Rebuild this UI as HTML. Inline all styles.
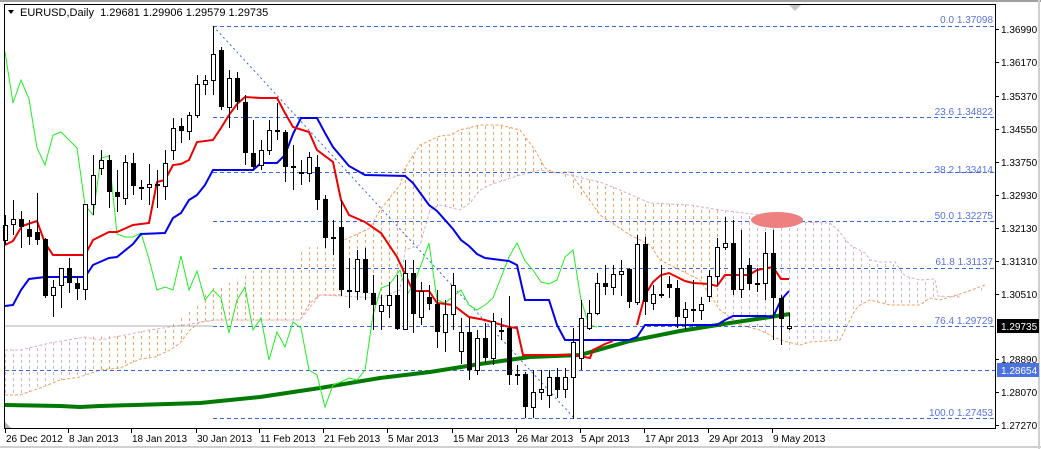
<!DOCTYPE html>
<html><head><meta charset="utf-8"><style>
html,body{margin:0;padding:0;background:#fff;width:1041px;height:449px;overflow:hidden}
svg{display:block;font-family:"Liberation Sans",Arial,sans-serif}
</style></head><body>
<svg width="1041" height="449" viewBox="0 0 1041 449" xmlns="http://www.w3.org/2000/svg">
<defs>
<pattern id="hatch" width="8" height="6" patternUnits="userSpaceOnUse" x="1">
<line x1="4.5" y1="0" x2="4.5" y2="3" stroke="#f0a060" stroke-width="1"/>
</pattern>
<pattern id="hatch2" width="8" height="6" patternUnits="userSpaceOnUse" x="1">
<line x1="4.5" y1="0" x2="4.5" y2="3" stroke="#d8b0cc" stroke-width="1"/>
</pattern>
</defs>
<rect x="0" y="0" width="1041" height="449" fill="#fff"/>
<line x1="0" y1="1" x2="1041" y2="1" stroke="#a0a0a0" stroke-width="2"/>
<line x1="1039" y1="0" x2="1039" y2="449" stroke="#d0d0d0" stroke-width="2"/>
<line x1="0" y1="447" x2="1041" y2="447" stroke="#d0d0d0" stroke-width="2"/>

<!-- cloud -->
<polygon fill="url(#hatch2)" points="5,350 20,350 50,343 85,337 100,340 120,336 150,330 170,327 180,318 200,303 210,288 225,285 245,275 255,270 270,268 294,267 300,252 310,247 325,247 340,242 370,228 380,210 400,185 405,168 420,145 440,136 450,135 460,130 480,125 500,125 520,130 535,150 545,168 555,173 570,172 600,182 620,190 650,203 690,205 720,210 760,215 790,222 830,223 838,230 850,245 865,253 870,260 880,262 895,262 905,276 920,280 935,279 938,296 960,297 985,285 985,290 960,294 940,300 930,298 920,305 890,305 870,300 860,305 855,310 840,340 810,342 800,345 790,350 780,340 760,330 740,325 720,310 700,280 680,270 660,260 650,245 630,235 600,215 580,195 560,173 540,170 520,175 490,185 480,190 470,203 460,210 440,205 430,210 420,245 405,250 400,290 380,298 360,300 350,302 340,295 320,295 310,303 300,320 215,320 200,322 190,330 180,343 170,350 155,357 140,359 120,368 100,370 80,377 60,380 40,388 20,395 5,395"/>
<polygon fill="url(#hatch)" points="85,337 120,336 150,330 170,327 180,318 200,303 210,288 225,285 245,275 255,270 270,268 294,267 300,252 310,247 325,247 340,242 370,228 380,210 400,185 405,168 420,145 440,136 450,135 460,130 480,125 500,125 520,130 535,150 545,168 520,175 490,185 480,190 470,203 460,210 440,205 430,210 420,245 405,250 400,290 380,298 360,300 340,295 320,295 310,303 300,320 215,320 200,322 190,330 180,343 170,350 155,357 140,359 120,368 100,370"/>
<polygon fill="url(#hatch)" points="560,173 600,182 620,190 650,203 690,205 720,210 720,310 700,280 680,270 660,260 650,245 630,235 600,215 580,195"/>
<polyline fill="none" stroke="#f0a060" stroke-width="1" stroke-dasharray="3,2" points="5,395 20,395 40,388 60,380 80,377 100,370 120,368 140,359 155,357 170,350 180,343 190,330 200,322 215,320 300,320 310,303 320,295 340,295 340,242 370,228 380,210 400,185 405,168 420,145 440,136 450,135 460,130 480,125 500,125 520,130 535,150 545,168 555,173 570,172 600,215 630,235 650,245 660,260 680,270 700,280 720,310 740,325 760,330 780,340 800,345 810,342 840,340 855,310 860,305 870,300 890,305 920,305 930,298 940,300 960,294 985,285"/>
<polyline fill="none" stroke="#d8b0cc" stroke-width="1" stroke-dasharray="3,2" points="5,350 20,350 50,343 85,337 100,340 120,336 150,330 170,327 215,320 300,320 320,295 380,298 400,290 405,250 420,245 430,210 440,205 460,210 470,203 480,190 490,185 520,175 540,170 560,173 600,182 620,190 650,203 690,205 720,210 760,215 790,222 830,223 838,230 850,245 865,253 870,260 880,262 895,262 905,276 920,280 935,279 938,296 960,297"/>

<line x1="5" y1="326" x2="213" y2="326" stroke="#b0b0b0"/>
<g stroke="#3a66e0" stroke-dasharray="4,3" stroke-width="1">
<line x1="213" y1="26.5" x2="995" y2="26.5"/>
<line x1="213" y1="117.5" x2="995" y2="117.5"/>
<line x1="213" y1="172.5" x2="995" y2="172.5"/>
<line x1="213" y1="221.5" x2="995" y2="221.5"/>
<line x1="213" y1="268.5" x2="995" y2="268.5"/>
<line x1="213" y1="326.5" x2="995" y2="326.5"/>
<line x1="5" y1="370.5" x2="995" y2="370.5"/>
<line x1="213" y1="418.5" x2="995" y2="418.5"/>
</g>
<line x1="213" y1="26" x2="575" y2="419" stroke="#3a66e0" stroke-dasharray="2,3"/>
<g fill="#5a72e0" font-size="10" text-anchor="end">
<text x="993" y="23">0.0 1.37098</text>
<text x="993" y="115">23.6 1.34822</text>
<text x="993" y="173">38.2 1.33414</text>
<text x="993" y="219">50.0 1.32275</text>
<text x="993" y="265">61.8 1.31137</text>
<text x="993" y="324">76.4 1.29729</text>
<text x="993" y="416">100.0 1.27453</text>
</g>

<ellipse cx="777" cy="220" rx="26" ry="8" fill="#ee8080"/>

<polyline fill="none" stroke="#007a00" stroke-width="4" points="5,405 60,406 80,407 100,406 200,403 260,397 320,388 380,378 430,372 480,364 530,357 580,355 630,341 680,331 730,323 790,314"/>
<polyline fill="none" stroke="#22ee22" stroke-width="1" points="5,52 13,103 21,80 29,99 37,148 45,165 53,135 61,132 69,140 77,148 85,205 93,215 101,158 109,156 117,234 125,237 133,237 141,233 149,259 157,290 165,287 173,290 181,256 189,290 197,271 205,300 213,290 221,298 229,333 237,300 245,287 253,330 261,318 269,360 277,332 285,347 293,322 301,328 309,370 317,375 325,407 333,385 341,382 349,378 357,380 365,370 373,315 381,288 389,285 400,270 407,295 413,285 421,265 429,243 437,300 445,303 461,290 469,305 477,310 485,305 493,298 509,257 517,243 525,261 533,270 541,282 549,284 557,280 565,257 573,250 581,300 589,325 597,327"/>
<polyline fill="none" stroke="#0000ee" stroke-width="2" points="5,306 13,305 21,290 29,279 45,277 85,277 93,265 109,258 117,257 133,244 141,234 165,233 173,218 181,213 189,200 197,195 205,185 213,170 253,170 261,163 277,163 285,155 293,134 301,118 317,118 325,133 333,147 349,166 365,175 405,176 413,183 429,205 437,211 453,229 461,240 469,246 477,254 485,258 509,261 517,265 525,300 549,300 557,325 565,340 629,340 637,337 645,325 717,325 725,320 733,316 765,316 773,317 781,300 789,291"/>
<polyline fill="none" stroke="#ee0000" stroke-width="2" points="5,245 13,241 22,226 37,221 45,243 53,255 85,255 93,240 109,232 117,232 133,225 149,223 157,182 165,180 173,165 181,164 189,160 197,142 213,140 221,128 229,115 237,104 245,97 261,98 277,98 285,113 293,127 309,132 317,150 333,162 341,200 349,215 365,222 381,233 397,257 413,291 429,291 437,303 453,305 469,317 485,320 509,327 517,328 523,355 573,355 590,358 593,350 605,344 613,341"/>
<polyline fill="none" stroke="#ee0000" stroke-width="2" points="637,325 645,295 653,282 661,275 669,273 677,277 685,281 693,283 709,284 717,286 725,275 749,275 757,270 773,267 781,279 789,279"/>

<g stroke="#000" stroke-width="1" fill="none">
<path d="M5.5 215V245M13.5 200V235M21.5 211V248M29.5 220V245M37.5 193V245M45.5 238V298M53.5 280V317M61.5 268V308M69.5 258V293M77.5 276V300M85.5 204V300M93.5 155V215M101.5 150V175M109.5 155V208M117.5 170V212M125.5 155V205M133.5 153V195M141.5 180V200M149.5 164V205M157.5 170V208M165.5 150V200M173.5 118V160M181.5 118V143M189.5 112V140M197.5 75V118M205.5 75V95M213.5 26V95M221.5 47V110M229.5 70V128M237.5 72V110M245.5 95V165M253.5 120V170M261.5 140V170M269.5 120V155M277.5 103V140M285.5 130V182M293.5 145V190M301.5 160V185M309.5 152V182M317.5 155V210M325.5 195V248M333.5 220V255M341.5 200V296M349.5 258V308M357.5 250V300M365.5 248V300M373.5 275V330M381.5 295V330M389.5 282V318M397.5 275V330M405.5 260V330M413.5 260V333M421.5 282V325M429.5 285V310M437.5 290V348M445.5 300V352M453.5 273V330M461.5 318V364M469.5 318V380M477.5 330V375M485.5 323V363M493.5 313V365M501.5 318V340M509.5 296V385M517.5 365V385M525.5 372V418M533.5 370V418M541.5 370V400M549.5 370V408M557.5 368V398M565.5 368V398M573.5 328V419M581.5 300V370M589.5 300V330M597.5 273V315M605.5 265V295M613.5 265V295M621.5 260V296M629.5 268V308M637.5 235V305M645.5 237V315M653.5 285V310M661.5 265V298M669.5 276V298M677.5 280V328M685.5 302V330M693.5 280V322M701.5 297V320M709.5 270V302M717.5 238V285M725.5 217V250M733.5 220V295M741.5 230V298M749.5 258V290M757.5 268V292M765.5 232V300M773.5 230V340M781.5 295V345M789.5 313V330"/>
</g>
<g fill="#000">
<rect x="19" y="219" width="5" height="8"/><rect x="27" y="229" width="5" height="8"/><rect x="35" y="232" width="5" height="8"/><rect x="43" y="239" width="5" height="57"/><rect x="67" y="268" width="5" height="15"/><rect x="75" y="283" width="5" height="6"/><rect x="107" y="160" width="5" height="32"/><rect x="115" y="192" width="5" height="5"/><rect x="131" y="163" width="5" height="23"/><rect x="179" y="126" width="5" height="5"/><rect x="219" y="50" width="5" height="57"/><rect x="235" y="78" width="5" height="24"/><rect x="243" y="102" width="5" height="51"/><rect x="251" y="153" width="5" height="14"/><rect x="283" y="132" width="5" height="35"/><rect x="315" y="167" width="5" height="33"/><rect x="323" y="199" width="5" height="39"/><rect x="339" y="227" width="5" height="63"/><rect x="363" y="259" width="5" height="34"/><rect x="371" y="293" width="5" height="12"/><rect x="395" y="295" width="5" height="34"/><rect x="411" y="273" width="5" height="41"/><rect x="427" y="297" width="5" height="7"/><rect x="435" y="304" width="5" height="28"/><rect x="467" y="332" width="5" height="38"/><rect x="483" y="338" width="5" height="20"/><rect x="507" y="328" width="5" height="47"/><rect x="523" y="374" width="5" height="33"/><rect x="555" y="377" width="5" height="13"/><rect x="603" y="283" width="5" height="4"/><rect x="627" y="269" width="5" height="33"/><rect x="643" y="244" width="5" height="58"/><rect x="667" y="284" width="5" height="4"/><rect x="675" y="288" width="5" height="29"/><rect x="731" y="243" width="5" height="47"/><rect x="747" y="265" width="5" height="19"/><rect x="771" y="253" width="5" height="45"/><rect x="779" y="298" width="5" height="21"/>
<rect x="139" y="187" width="5" height="2"/><rect x="155" y="184" width="5" height="2"/><rect x="275" y="130" width="5" height="2"/><rect x="291" y="166" width="5" height="2"/><rect x="299" y="172" width="5" height="2"/><rect x="331" y="237" width="5" height="2"/><rect x="347" y="290" width="5" height="2"/><rect x="499" y="330" width="5" height="2"/><rect x="515" y="374" width="5" height="2"/><rect x="659" y="294" width="5" height="2"/><rect x="691" y="309" width="5" height="2"/><rect x="755" y="283" width="5" height="2"/>
</g>
<g fill="#fff" stroke="#000">
<rect x="3.5" y="225.5" width="4" height="15"/><rect x="11.5" y="219.5" width="4" height="5"/><rect x="51.5" y="287.5" width="4" height="8"/><rect x="59.5" y="268.5" width="4" height="17"/><rect x="83.5" y="204.5" width="4" height="85"/><rect x="91.5" y="175.5" width="4" height="29"/><rect x="99.5" y="160.5" width="4" height="8"/><rect x="123.5" y="162.5" width="4" height="36"/><rect x="147.5" y="184.5" width="4" height="3"/><rect x="163.5" y="163.5" width="4" height="23"/><rect x="171.5" y="128.5" width="4" height="22"/><rect x="187.5" y="115.5" width="4" height="16"/><rect x="195.5" y="84.5" width="4" height="31"/><rect x="203.5" y="80.5" width="4" height="4"/><rect x="211.5" y="54.5" width="4" height="26"/><rect x="227.5" y="78.5" width="4" height="29"/><rect x="259.5" y="150.5" width="4" height="15"/><rect x="267.5" y="130.5" width="4" height="20"/><rect x="307.5" y="157.5" width="4" height="16"/><rect x="355.5" y="259.5" width="4" height="32"/><rect x="379.5" y="305.5" width="4" height="6"/><rect x="387.5" y="295.5" width="4" height="10"/><rect x="403.5" y="273.5" width="4" height="56"/><rect x="419.5" y="291.5" width="4" height="26"/><rect x="443.5" y="314.5" width="4" height="18"/><rect x="451.5" y="285.5" width="4" height="29"/><rect x="459.5" y="332.5" width="4" height="19"/><rect x="475.5" y="338.5" width="4" height="32"/><rect x="491.5" y="321.5" width="4" height="37"/><rect x="531.5" y="392.5" width="4" height="15"/><rect x="539.5" y="389.5" width="4" height="3"/><rect x="547.5" y="377.5" width="4" height="18"/><rect x="563.5" y="377.5" width="4" height="12"/><rect x="571.5" y="342.5" width="4" height="35"/><rect x="579.5" y="318.5" width="4" height="40"/><rect x="587.5" y="313.5" width="4" height="15"/><rect x="595.5" y="283.5" width="4" height="30"/><rect x="611.5" y="274.5" width="4" height="13"/><rect x="619.5" y="271.5" width="4" height="3"/><rect x="635.5" y="244.5" width="4" height="58"/><rect x="651.5" y="294.5" width="4" height="9"/><rect x="683.5" y="309.5" width="4" height="8"/><rect x="699.5" y="304.5" width="4" height="6"/><rect x="707.5" y="276.5" width="4" height="20"/><rect x="715.5" y="247.5" width="4" height="29"/><rect x="723.5" y="243.5" width="4" height="4"/><rect x="739.5" y="268.5" width="4" height="21"/><rect x="763.5" y="253.5" width="4" height="30"/><rect x="787.5" y="326.5" width="4" height="2"/>
</g>

<rect x="4.5" y="4.5" width="991" height="424" fill="none" stroke="#000"/>
<polygon points="5,428 5,422 11,428" fill="#b0b0b0"/>
<polygon points="789,5 801,5 795,11" fill="#c8c8c8"/>

<polygon points="8,10 14,10 11,14" fill="#000"/>
<text x="20" y="16" font-size="11" fill="#000" xml:space="preserve">EURUSD,Daily  1.29681 1.29906 1.29579 1.29735</text>

<g stroke="#000">
<path d="M996 29.5h3M996 62.5h3M996 96.5h3M996 129.5h3M996 162.5h3M996 195.5h3M996 228.5h3M996 261.5h3M996 294.5h3M996 359.5h3M996 392.5h3M996 425.5h3"/>
</g>
<g font-size="10" fill="#000">
<text x="1001" y="33">1.36990</text>
<text x="1001" y="66">1.36170</text>
<text x="1001" y="100">1.35370</text>
<text x="1001" y="133">1.34550</text>
<text x="1001" y="166">1.33750</text>
<text x="1001" y="199">1.32930</text>
<text x="1001" y="232">1.32130</text>
<text x="1001" y="265">1.31310</text>
<text x="1001" y="298">1.30510</text>
<text x="1001" y="363">1.28890</text>
<text x="1001" y="396">1.28070</text>
<text x="1001" y="429">1.27270</text>
</g>
<rect x="997" y="319" width="42" height="14" fill="#000"/>
<text x="1001" y="330" font-size="10" fill="#fff">1.29735</text>
<rect x="997" y="363" width="42" height="14" fill="#4a72e0"/>
<text x="1001" y="374" font-size="10" fill="#fff">1.28654</text>

<g stroke="#000">
<path d="M5.5 429v4M68.5 429v4M131.5 429v4M196.5 429v4M259.5 429v4M323.5 429v4M387.5 429v4M452.5 429v4M516.5 429v4M580.5 429v4M644.5 429v4M708.5 429v4M772.5 429v4"/>
</g>
<g font-size="10" fill="#000">
<text x="6" y="442">26 Dec 2012</text>
<text x="69" y="442">8 Jan 2013</text>
<text x="132" y="442">18 Jan 2013</text>
<text x="197" y="442">30 Jan 2013</text>
<text x="260" y="442">11 Feb 2013</text>
<text x="324" y="442">21 Feb 2013</text>
<text x="388" y="442">5 Mar 2013</text>
<text x="453" y="442">15 Mar 2013</text>
<text x="517" y="442">26 Mar 2013</text>
<text x="581" y="442">5 Apr 2013</text>
<text x="645" y="442">17 Apr 2013</text>
<text x="709" y="442">29 Apr 2013</text>
<text x="773" y="442">9 May 2013</text>
</g>
</svg>
</body></html>
